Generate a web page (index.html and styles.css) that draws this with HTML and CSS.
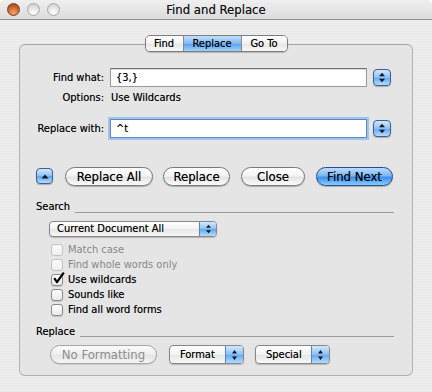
FILE: index.html
```html
<!DOCTYPE html>
<html lang="en">
<head>
    <meta charset="UTF-8">
    <title>Find and Replace</title>
    <link rel="stylesheet" href="styles.css">
</head>
<body>

<div class="window">
    <div class="titlebar">
        <div class="lights">
            <span class="light light-close"></span>
            <span class="light"></span>
            <span class="light"></span>
        </div>
        <div class="title">Find and Replace</div>
        <div></div>
    </div>

    <div class="content">
        <div class="tabs">
            <div class="tab-strip">
                <span class="tab tab-find">Find</span>
                <span class="tab tab-replace selected">Replace</span>
                <span class="tab tab-goto">Go To</span>
            </div>
        </div>

        <div class="group">
            <div class="field-row">
                <span class="field-label">Find what:</span>
                <div class="text-input">{3,}</div>
                <span class="stepper">
                    <svg width="8" height="11" viewBox="0 0 8 11"><path d="M1 4.2 L4 0.8 L7 4.2 Z M1 6.8 L4 10.2 L7 6.8 Z" fill="#101820"/></svg>
                </span>
            </div>
            <div class="field-row options-row">
                <span class="field-label">Options:</span>
                <span class="options-value">Use Wildcards</span>
            </div>
            <div class="field-row replace-row">
                <span class="field-label">Replace with:</span>
                <div class="text-input focused">^t</div>
                <span class="stepper">
                    <svg width="8" height="11" viewBox="0 0 8 11"><path d="M1 4.2 L4 0.8 L7 4.2 Z M1 6.8 L4 10.2 L7 6.8 Z" fill="#101820"/></svg>
                </span>
            </div>

            <div class="button-row">
                <span class="disclosure">
                    <svg width="8" height="5" viewBox="0 0 8 5"><path d="M0.5 4.5 L4 0.5 L7.5 4.5 Z" fill="#101820"/></svg>
                </span>
                <button class="btn btn-replace-all">Replace All</button>
                <button class="btn btn-replace">Replace</button>
                <button class="btn btn-close">Close</button>
                <button class="btn btn-default btn-find-next">Find Next</button>
            </div>

            <div class="section-head search-head">
                <span>Search</span>
                <span class="section-line"></span>
            </div>
            <div class="popup popup-scope">
                <span class="popup-text">Current Document All</span>
                <span class="popup-arrows">
                    <svg width="7" height="10" viewBox="0 0 7 10"><path d="M1 3.8 L3.5 0.8 L6 3.8 Z M1 6.2 L3.5 9.2 L6 6.2 Z" fill="#101820"/></svg>
                </span>
            </div>

            <div class="checklist">
                <div class="check-row disabled"><span class="checkbox"></span>Match case</div>
                <div class="check-row disabled"><span class="checkbox"></span>Find whole words only</div>
                <div class="check-row">
                    <span class="checkbox">
                        <svg width="13" height="13" viewBox="0 0 13 13"><path d="M2.2 6.2 L5 10.2 L11.8 0.6" fill="none" stroke="#000" stroke-width="2.2" stroke-linejoin="round"/></svg>
                    </span>Use wildcards
                </div>
                <div class="check-row"><span class="checkbox"></span>Sounds like</div>
                <div class="check-row"><span class="checkbox"></span>Find all word forms</div>
            </div>

            <div class="section-head replace-head">
                <span>Replace</span>
                <span class="section-line"></span>
            </div>
            <div class="bottom-row">
                <button class="btn btn-disabled btn-no-format">No Formatting</button>
                <div class="popup popup-small popup-format">
                    <span class="popup-text">Format</span>
                    <span class="popup-arrows">
                        <svg width="7" height="12" viewBox="0 0 7 12"><path d="M1 4.5 L3.5 1 L6 4.5 Z M1 7.5 L3.5 11 L6 7.5 Z" fill="#101820"/></svg>
                    </span>
                </div>
                <div class="popup popup-small popup-special">
                    <span class="popup-text">Special</span>
                    <span class="popup-arrows">
                        <svg width="7" height="12" viewBox="0 0 7 12"><path d="M1 4.5 L3.5 1 L6 4.5 Z M1 7.5 L3.5 11 L6 7.5 Z" fill="#101820"/></svg>
                    </span>
                </div>
            </div>
        </div>
    </div>
</div>

</body>
</html>
```

FILE: styles.css
```css
* {
    box-sizing: border-box;
}
body {
    margin: 0;
    background: #ffffff;
    font-family: "DejaVu Sans Condensed", "DejaVu Sans", sans-serif;
    font-size: 11px;
    color: #000;
    text-shadow: 0 0 0.4px rgba(0, 0, 0, 0.5);
}
.window {
    width: 432px;
    height: 392px;
    border-radius: 5px 5px 0 0;
    overflow: hidden;
    background: repeating-linear-gradient(to bottom, #efefef 0, #efefef 1px, #e8e8e8 1px, #e8e8e8 2px);
}

/* title bar */
.titlebar {
    display: grid;
    grid-template-columns: 1fr auto 1fr;
    align-items: center;
    height: 20px;
    border-bottom: 1px solid #8e8e8e;
    background: linear-gradient(to bottom, #efefef, #dcdcdc);
}
.lights {
    display: flex;
    gap: 7px;
    padding-left: 7px;
}
.light {
    width: 13px;
    height: 13px;
    border-radius: 50%;
    border: 1px solid #a8a8a8;
    background: radial-gradient(circle at 50% 78%, #ffffff, #e2e2e2 55%, #c4c4c4 100%);
}
.light-close {
    border-color: #7e3f1f;
    background: radial-gradient(circle at 50% 80%, #f2a56e, #c9652f 55%, #8f3d18 100%);
}
.title {
    font-size: 13px;
    color: #111;
}

/* content */
.content {
    padding-top: 15px;
}
.tabs {
    display: flex;
    justify-content: center;
    position: relative;
    z-index: 1;
    height: 17px;
}
.tab-strip {
    display: flex;
    border: 1px solid #7c7c7c;
    border-radius: 5px;
    overflow: hidden;
    box-shadow: 0 1px 1px rgba(0, 0, 0, 0.2);
}
.tab {
    display: flex;
    align-items: center;
    justify-content: center;
    height: 15px;
    background: linear-gradient(to bottom, #ffffff, #f1f1f1 50%, #e6e6e6 52%, #f8f8f8);
}
.tab + .tab {
    border-left: 1px solid #8a8a8a;
}
.tab-find { width: 37px; }
.tab-replace { width: 58px; }
.tab-goto { width: 46px; }
.tab.selected {
    background: linear-gradient(to bottom, #c4e0fc, #7fb8f4 50%, #5aa0ef 52%, #9fd2ff);
}

.group {
    margin: -8px 19px 0;
    height: 332px;
    border: 1px solid #b2b2b2;
    border-top-color: #a6a6a6;
    border-radius: 6px;
    background: #e5e5e5;
    padding: 23px 18px 11px 16px;
}

/* text fields */
.field-row {
    display: flex;
    align-items: center;
    height: 19px;
}
.field-label {
    width: 68px;
    margin-right: 6px;
    text-align: right;
}
.text-input {
    width: 257px;
    height: 19px;
    line-height: 17px;
    padding-left: 5px;
    background: #fff;
    border: 1px solid #9a9a9a;
    border-top-color: #6f6f6f;
    box-shadow: inset 0 1px 1px rgba(0, 0, 0, 0.15);
}
.text-input.focused {
    border-color: #5a86c5;
    box-shadow: 0 0 0 2px #a3c3ea;
}
.stepper {
    display: flex;
    align-items: center;
    justify-content: center;
    width: 18px;
    height: 17px;
    margin-left: 6px;
    border: 1px solid #3c5f98;
    border-radius: 4px;
    background: linear-gradient(to bottom, #d4e8fd, #8cc0f6 50%, #62a6f0 52%, #b4dcff);
    box-shadow: 0 1px 1px rgba(0, 0, 0, 0.25);
}
.options-row {
    margin-top: 2px;
    height: 16px;
}
.options-value {
    padding-left: 1px;
}
.replace-row {
    margin-top: 14px;
}

/* push buttons */
.button-row {
    display: flex;
    align-items: center;
    height: 18px;
    margin-top: 29px;
}
.disclosure {
    display: flex;
    align-items: center;
    justify-content: center;
    width: 17px;
    height: 16px;
    border: 1px solid #3c5f98;
    border-radius: 4px;
    background: linear-gradient(to bottom, #d4e8fd, #8cc0f6 50%, #62a6f0 52%, #b4dcff);
    box-shadow: 0 1px 1px rgba(0, 0, 0, 0.25);
}
.btn {
    height: 19px;
    padding: 0;
    font-family: inherit;
    font-size: 13px;
    color: #000;
    text-shadow: 0 0 0.4px rgba(0, 0, 0, 0.5);
    border: 1px solid #7a7a7a;
    border-radius: 10px;
    background: linear-gradient(to bottom, #ffffff, #f4f4f4 45%, #e4e4e4 55%, #fbfbfb);
    box-shadow: 0 1px 1px rgba(0, 0, 0, 0.25);
}
.btn-replace-all { width: 88px; margin-left: 12px; }
.btn-replace { width: 67px; margin-left: 10px; }
.btn-close { width: 64px; margin-left: 11px; }
.btn-find-next { width: 77px; margin-left: 11px; }
.btn-default {
    border-color: #284d8f;
    background: linear-gradient(to bottom, #bcdcfd, #7cb7f5 45%, #3f8fec 55%, #86ccff);
}
.btn-disabled {
    color: #8c8c8c;
    text-shadow: none;
    border-color: #a6a6a6;
    background: linear-gradient(to bottom, #fbfbfb, #f0f0f0 45%, #e6e6e6 55%, #f5f5f5);
    box-shadow: 0 1px 1px rgba(0, 0, 0, 0.12);
}

/* sections */
.section-head {
    display: flex;
    height: 16px;
    line-height: 16px;
}
.section-line {
    flex: 1;
    height: 1px;
    margin-left: 5px;
    background: #9c9c9c;
}
.search-head {
    margin-top: 14px;
}
.search-head .section-line {
    margin-top: 13px;
}
.replace-head {
    margin-top: 7px;
}
.replace-head .section-line {
    margin-top: 12px;
}

/* popups */
.popup {
    display: flex;
    height: 16px;
    border: 1px solid #878787;
    border-radius: 4px;
    overflow: hidden;
    background: linear-gradient(to bottom, #ffffff, #f3f3f3 50%, #e6e6e6 52%, #f8f8f8);
    box-shadow: 0 1px 1px rgba(0, 0, 0, 0.2);
}
.popup-scope {
    width: 168px;
    margin: 6px 0 0 13px;
}
.popup-text {
    flex: 1;
    padding-left: 7px;
    line-height: 14px;
}
.popup-arrows {
    display: flex;
    align-items: center;
    justify-content: center;
    width: 17px;
    border-left: 1px solid #5b83c2;
    background: linear-gradient(to bottom, #d4e8fd, #8cc0f6 50%, #62a6f0 52%, #b4dcff);
}
.popup-small {
    width: 75px;
    height: 19px;
}
.popup-small .popup-text {
    line-height: 17px;
    padding-left: 10px;
}
.popup-small .popup-arrows {
    width: 18px;
}
.popup-format { margin-left: 12px; }
.popup-special { margin-left: 11px; }

/* checkboxes */
.checklist {
    margin-top: 5px;
    padding-left: 15px;
}
.check-row {
    display: flex;
    align-items: center;
    height: 15px;
}
.checkbox {
    position: relative;
    width: 12px;
    height: 12px;
    margin-right: 5px;
    border: 1px solid #8a8a8a;
    border-radius: 3px;
    background: linear-gradient(to bottom, #ffffff, #e9e9e9);
    box-shadow: 0 1px 1px rgba(0, 0, 0, 0.15);
}
.checkbox svg {
    position: absolute;
    left: 0;
    top: -3px;
}
.check-row.disabled {
    color: #888;
    text-shadow: none;
}
.check-row.disabled .checkbox {
    border-color: #c2c2c2;
    background: linear-gradient(to bottom, #fafafa, #efefef);
    box-shadow: none;
}

/* bottom buttons */
.bottom-row {
    display: flex;
    align-items: center;
    height: 19px;
    margin-top: 5px;
    padding-left: 14px;
}
.btn-no-format {
    width: 107px;
}
```
